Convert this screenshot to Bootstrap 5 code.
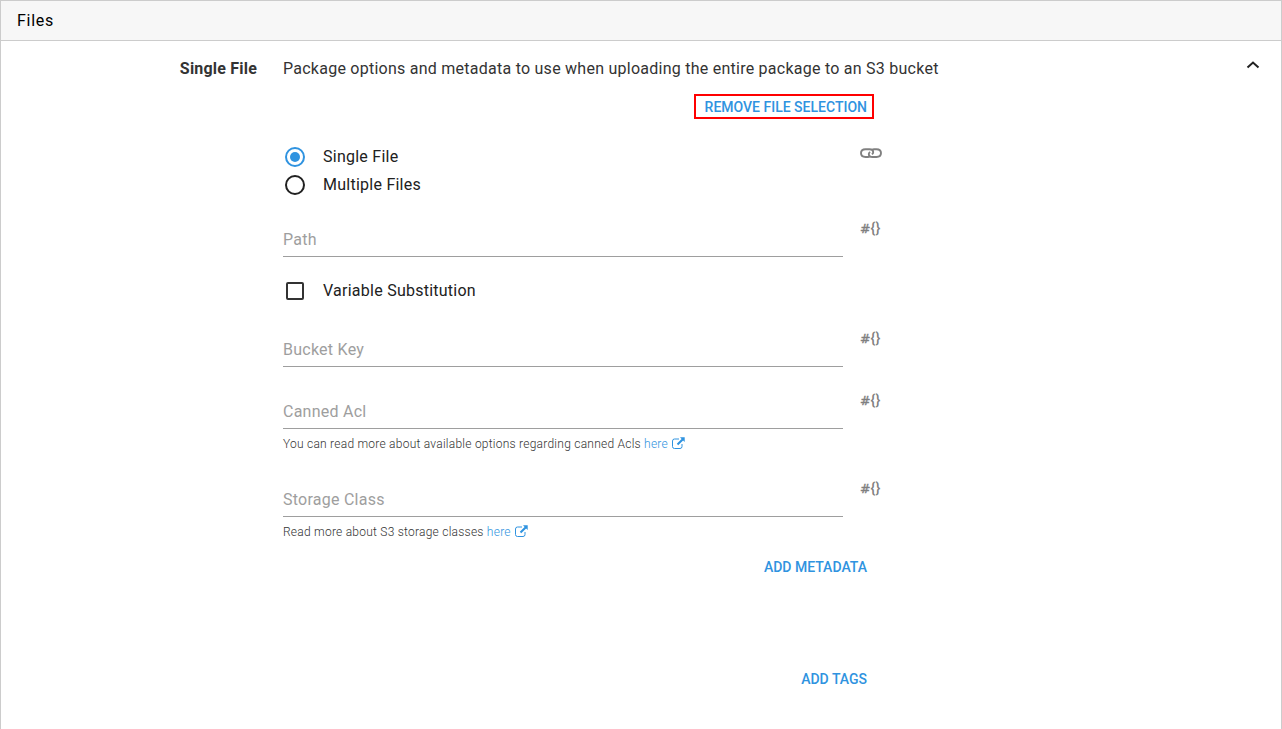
<!DOCTYPE html>
<html lang="en">
<head>
<meta charset="utf-8">
<meta name="viewport" content="width=device-width, initial-scale=1">
<title>Files</title>
<link href="https://cdn.jsdelivr.net/npm/bootstrap@5.3.0/dist/css/bootstrap.min.css" rel="stylesheet">
<style>
body{font-family:Roboto,"Liberation Sans",sans-serif;font-size:16px;line-height:24px;letter-spacing:.25px;color:#333;background:#fff;overflow:hidden}
.panel{border:1px solid #ccc;border-bottom:0;height:729px}
.panel-head{height:40px;background:#f7f7f7;border-bottom:1px solid #ccc;color:#000;padding:0 16px;letter-spacing:.7px}
.side-label{width:256px;font-weight:700;letter-spacing:.2px;padding-top:16px}
.content{width:602px;margin-left:26px;padding-top:16px}
.act-row{margin-right:11px}
.act{font-size:14px;font-weight:500;line-height:20px;letter-spacing:0;color:#2f93e0;background:none;border:2px solid transparent;padding:1px 5px 0 8.6px;border-radius:0}
.act-boxed{border-color:#f00}
.choice{height:28px;color:#212121}
.choice svg{margin:-1px 16px 0 0}
.field-row{margin-top:28px}
.field{width:560px;height:34px;border-bottom:1px solid #9e9e9e;color:#9e9e9e;padding-top:5px}
.bind{width:24px;font-size:14.5px;font-weight:500;line-height:20px;letter-spacing:.3px;color:#808080;margin:-4px 0 0 17px}
.bind span{font:400 12.5px/10px "DejaVu Sans",sans-serif;letter-spacing:0;-webkit-text-stroke:.4px #808080}
.hint{font-size:12px;font-weight:300;line-height:16px;letter-spacing:.24px;color:#333;margin-top:7px}
.hint a{color:#2f93e0}
.hint svg{margin-left:4px;vertical-align:-1px}
.collapse-btn{padding:18px 20px 0 0}
</style>
</head>
<body>
<main class="panel">
  <header class="panel-head d-flex align-items-center">Files</header>
  <section class="d-flex align-items-start">
    <div class="side-label text-end flex-shrink-0">Single File</div>
    <div class="content flex-shrink-0">
      <div class="text-nowrap">Package options and metadata to use when uploading the entire package to an S3 bucket</div>
      <div class="act-row d-flex justify-content-end" style="margin-top:13px;margin-bottom:24px"><button class="act act-boxed">REMOVE FILE SELECTION</button></div>
      <div class="d-flex">
        <div style="width:577px">
          <label class="choice d-flex align-items-center"><svg width="24" height="24" viewBox="0 0 24 24"><circle cx="12" cy="12" r="9" fill="none" stroke="#2f93e0" stroke-width="2"/><circle cx="12" cy="12" r="5" fill="#2f93e0"/></svg>Single File</label>
          <label class="choice d-flex align-items-center"><svg width="24" height="24" viewBox="0 0 24 24"><circle cx="12" cy="12" r="9" fill="none" stroke="#212121" stroke-width="2"/></svg>Multiple Files</label>
        </div>
        <svg width="22" height="20" viewBox="0 0 22 20" fill="none" stroke="#808080" stroke-width="1.900"><path d="M10 13.300Q9 14 8 14H5.500C3 14 1 12.500 1 10.100S3 6.200 5.500 6.200H9.500C11.700 6.200 13.200 7.600 13.200 9.200Q13.200 10.600 11.800 11.200"/><path d="M12 6.900Q13 6.200 14 6.200H16.500C19 6.200 21 7.700 21 10.100S19 14 16.500 14H12.500C10.300 14 8.800 12.600 8.800 11Q8.800 9.600 10.200 9"/></svg>
      </div>
      <div class="field-row d-flex" style="margin-top:24px"><div class="field flex-shrink-0">Path</div><div class="bind text-nowrap"><span>#</span>{}</div></div>
      <label class="choice d-flex align-items-center" style="margin-top:20px"><svg width="24" height="24" viewBox="0 0 24 24"><rect x="4" y="4" width="16" height="16" rx="1" fill="none" stroke="#333" stroke-width="2"/></svg>Variable Substitution</label>
      <div class="field-row d-flex"><div class="field flex-shrink-0">Bucket Key</div><div class="bind text-nowrap"><span>#</span>{}</div></div>
      <div class="field-row d-flex"><div class="field flex-shrink-0">Canned Acl</div><div class="bind text-nowrap"><span>#</span>{}</div></div>
      <div class="hint">You can read more about available options regarding canned Acls <a href="#" class="text-decoration-none">here<svg width="13" height="12" viewBox="0 0 13 12"><path d="M7 2H2.500Q.5 2 .5 4V9.500Q.5 11.500 2.500 11.500H8Q10 11.500 10 9.500V7" fill="none" stroke="#2f93e0"/><path d="M8 .2h4.700V5L11.100 3.400 6.200 8.200 4.800 6.800 9.600 1.900z" fill="#2f93e0"/></svg></a></div>
      <div class="field-row d-flex" style="margin-top:31px"><div class="field flex-shrink-0">Storage Class</div><div class="bind text-nowrap"><span>#</span>{}</div></div>
      <div class="hint">Read more about S3 storage classes <a href="#" class="text-decoration-none">here<svg width="13" height="12" viewBox="0 0 13 12"><path d="M7 2H2.500Q.5 2 .5 4V9.500Q.5 11.500 2.500 11.500H8Q10 11.500 10 9.500V7" fill="none" stroke="#2f93e0"/><path d="M8 .2h4.700V5L11.100 3.400 6.200 8.200 4.800 6.800 9.600 1.900z" fill="#2f93e0"/></svg></a></div>
      <div class="act-row d-flex justify-content-end" style="margin-top:14px"><button class="act">ADD METADATA</button></div>
      <div class="act-row d-flex justify-content-end" style="margin-top:87px"><button class="act">ADD TAGS</button></div>
    </div>
    <div class="collapse-btn ms-auto d-flex"><svg width="16" height="12" viewBox="0 0 16 12"><path d="M2.500 8.500 8 3.500l5.500 5" fill="none" stroke="#212121" stroke-width="2"/></svg></div>
  </section>
</main>
<script src="https://cdn.jsdelivr.net/npm/bootstrap@5.3.0/dist/js/bootstrap.bundle.min.js"></script>
</body>
</html>
